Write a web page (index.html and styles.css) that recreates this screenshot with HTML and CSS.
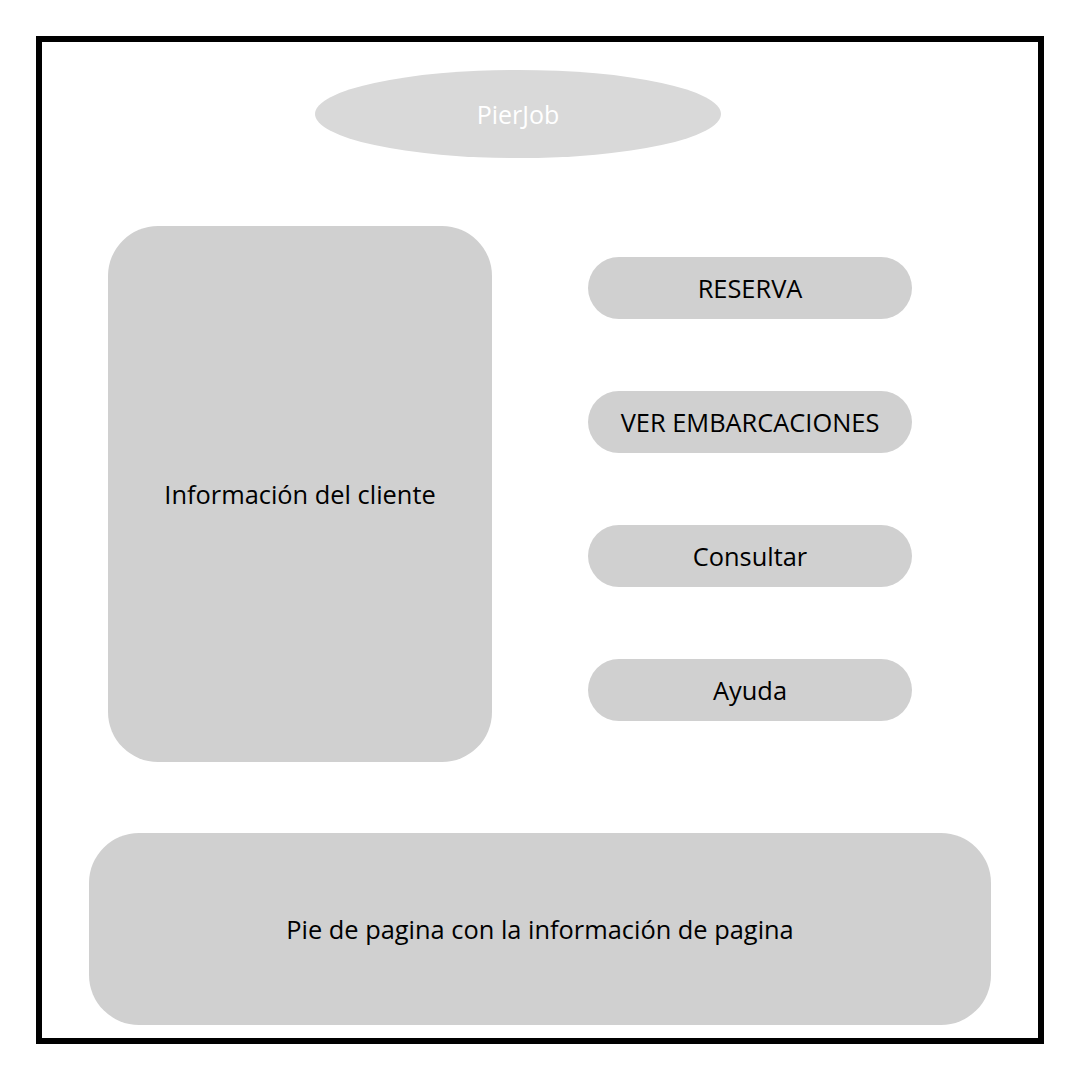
FILE: index.html
```html
<!DOCTYPE html>
<html lang="es">
<head>
  <meta charset="UTF-8">
  <meta name="viewport" content="width=device-width, initial-scale=1.0">
  <title>PierJob</title>
  <link rel="stylesheet" href="styles.css">
</head>
<body>
  <div class="frame">
    <div class="logo">PierJob</div>

    <div class="main">
      <div class="client-card">Información del cliente</div>
      <div class="menu">
        <div class="menu-btn">RESERVA</div>
        <div class="menu-btn">VER EMBARCACIONES</div>
        <div class="menu-btn">Consultar</div>
        <div class="menu-btn">Ayuda</div>
      </div>
    </div>

    <footer class="footer">Pie de pagina con la información de pagina</footer>
  </div>
</body>
</html>
```

FILE: styles.css
```css
* {
  box-sizing: border-box;
  font-family: 'Open Sans', sans-serif;
}
body {
  margin: 0;
  background: #fff;
  color: #000;
}
.frame {
  margin: 36px;
  width: 1008px;
  height: 1008px;
  border: 6px solid #000;
  padding-top: 28px;
  display: flex;
  flex-direction: column;
}
.logo {
  width: 406px;
  height: 88px;
  margin-left: 273px;
  border-radius: 50%;
  background: #d9d9d9;
  color: #fff;
  font-size: 25px;
  display: flex;
  align-items: center;
  justify-content: center;
}
.main {
  display: flex;
  margin-top: 68px;
}
.client-card {
  width: 384px;
  height: 536px;
  margin-left: 66px;
  border-radius: 50px;
  background: #d0d0d0;
  font-size: 25.4px;
  display: flex;
  align-items: center;
  justify-content: center;
}
.menu {
  display: flex;
  flex-direction: column;
  gap: 72px;
  margin-left: 96px;
  padding-top: 31px;
}
.menu-btn {
  width: 324px;
  height: 62px;
  border-radius: 31px;
  background: #d0d0d0;
  font-size: 25.4px;
  display: flex;
  align-items: center;
  justify-content: center;
}
.footer {
  width: 902px;
  height: 192px;
  margin-top: 71px;
  margin-left: 47px;
  border-radius: 50px;
  background: #d0d0d0;
  font-size: 25.4px;
  display: flex;
  align-items: center;
  justify-content: center;
}
```
